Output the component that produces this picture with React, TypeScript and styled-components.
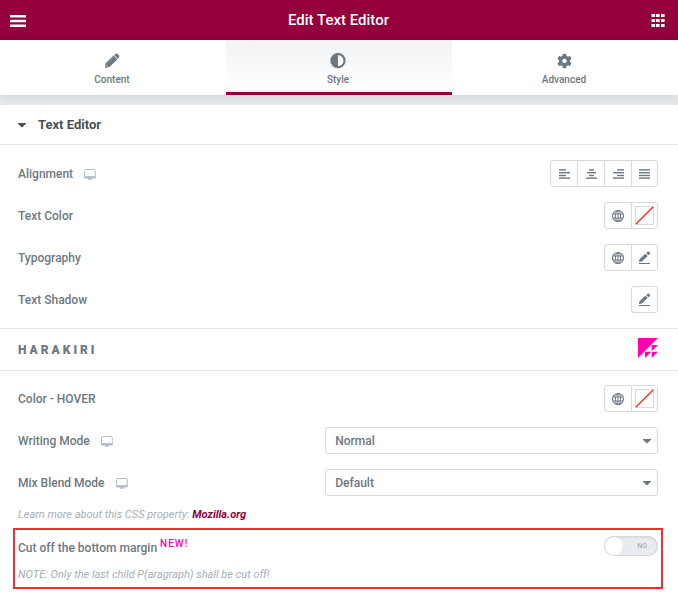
import React, { useState } from 'react';
import styled, { createGlobalStyle, css } from 'styled-components';

const BRAND = '#93003c';
const TEXT = '#6d7882';
const BORDER = '#d5dadf';
const RULE = '#e6e9ec';
const PINK = '#ff00b4';

const GlobalStyle = createGlobalStyle`
  *, *::before, *::after { box-sizing: border-box; }
  body {
    margin: 0;
    background: #fff;
    color: ${TEXT};
    font: 500 12px/15px Roboto, Arial, sans-serif;
  }
  button, select { font: inherit; color: inherit; }
  h1, h2, p { margin: 0; }
`;

const Header = styled.header`
  display: flex;
  align-items: center;
  justify-content: space-between;
  height: 40px;
  padding: 0 13px 0 10px;
  background: ${BRAND};
  color: #fff;
`;

const HeaderTitle = styled.h1`
  font-size: 15px;
  line-height: 20px;
  font-weight: 500;
`;

const HeaderButton = styled.button`
  display: flex;
  padding: 1px 0 0;
  border: 0;
  background: none;
`;

const Tabs = styled.nav`
  display: grid;
  grid-template-columns: repeat(3, 1fr);
  height: 55px;
  position: relative;
  box-shadow: 0 0 10px rgba(0, 0, 0, 0.12);
`;

const Tab = styled.button<{ $active?: boolean }>`
  display: flex;
  flex-direction: column;
  align-items: center;
  gap: 3px;
  padding: 13px 2px 0 0;
  border: 0;
  border-bottom: 3px solid transparent;
  background: #fff;
  font-size: 10px;
  line-height: 15px;
  ${(p) =>
    p.$active &&
    css`
      background: linear-gradient(#f1f3f5, #fff) padding-box;
      border-bottom-color: ${BRAND};
    `}
`;

const Content = styled.main`
  padding-top: 10px;
  background: #e6e9ec;
`;

const Panel = styled.section`
  background: #fff;
`;

const SectionToggle = styled.button`
  display: flex;
  align-items: center;
  gap: 11px;
  width: 100%;
  height: 40px;
  padding: 0 17px;
  border: 0;
  border-bottom: 1px solid ${RULE};
  background: #fff;
  color: #495157;
`;

const SectionTitle = styled.span`
  font-size: 13px;
  font-weight: 700;
`;

const Controls = styled.div`
  display: flex;
  flex-direction: column;
  gap: 15px;
  padding: 15px 20px 15px 18px;
`;

const Row = styled.div`
  display: flex;
  align-items: center;
  justify-content: space-between;
  min-height: 27px;
`;

const LabelGroup = styled.div`
  display: flex;
  align-items: center;
  gap: 10px;
  padding-top: 2px;
`;

const DeviceButton = styled.button`
  display: flex;
  padding: 0;
  border: 0;
  background: none;
`;

const ButtonGroup = styled.div`
  display: flex;
  border: 1px solid ${BORDER};
  border-radius: 3px;
`;

const IconButton = styled.button`
  display: flex;
  align-items: center;
  justify-content: center;
  width: 26px;
  height: 25px;
  padding: 0;
  border: 0;
  background: none;

  & + & {
    width: 27px;
    border-left: 1px solid ${BORDER};
  }
  & + &:last-child { width: 26px; }
  &:only-child { width: 25px; }
`;

const Brand = styled.div`
  display: flex;
  align-items: center;
  justify-content: space-between;
  height: 42px;
  padding: 0 20px 3px 18px;
  border-top: 1px solid ${RULE};
`;

const BrandControls = styled(Controls)`
  padding-top: 14px;
  border-top: 1px solid ${RULE};
`;

const BrandName = styled.h2`
  padding-top: 5px;
  font-size: 12px;
  line-height: 15px;
  font-weight: 900;
  letter-spacing: 3px;
`;

const SelectWrap = styled.div`
  display: grid;
  align-items: center;
  width: 52%;

  & > * { grid-area: 1 / 1; }
  & > svg { justify-self: end; margin-right: 6px; pointer-events: none; }
`;

const Select = styled.select`
  appearance: none;
  width: 100%;
  height: 27px;
  padding: 2px 9px 0;
  border: 1px solid ${BORDER};
  border-radius: 3px;
  background: #fff;
`;

const Note = styled.p`
  color: #a4afb7;
  font-size: 11px;
  line-height: 15px;
  font-weight: 400;
  font-style: italic;
`;

const NoteLink = styled.a`
  color: ${BRAND};
  font-weight: 700;
  text-decoration: none;
`;

const Learn = styled(Note)`
  margin-top: -4px;
`;

const Highlight = styled.div`
  display: flex;
  flex-direction: column;
  gap: 9px;
  margin: -9px -5px 0;
  padding: 4px 3px 5px;
  border: 2px solid #fb2a2e;
`;

const SwitchLine = styled.div`
  display: flex;
  align-items: center;
  justify-content: space-between;
  height: 24px;
`;

const SwitchLabel = styled.label`
  padding-top: 3px;
`;

const NewTag = styled.sup`
  margin-left: 3px;
  color: ${PINK};
  font-size: 10px;
  line-height: 9px;
  letter-spacing: 1px;
`;

const Switch = styled.input`
  appearance: none;
  display: flex;
  align-items: center;
  justify-content: space-between;
  width: 54px;
  height: 20px;
  margin: 0;
  padding-right: 11px;
  border-radius: 10px;
  background: #e9ebee;
  box-shadow: inset 0 0 0 1px ${BORDER}, inset 0 1px 3px rgba(0, 0, 0, 0.15);
  color: #a4afb7;
  font: 500 7px/10px Roboto, Arial, sans-serif;

  &::before {
    content: '';
    width: 18px;
    height: 18px;
    margin-left: 1px;
    border-radius: 50%;
    background: #fff;
  }
  &::after { content: 'NO'; }
  &:checked { flex-direction: row-reverse; padding: 0 1px 0 11px; background: #39b54a; color: #fff; }
  &:checked::after { content: 'YES'; }
`;

const MenuIcon = () => (
  <svg width="16" height="12" viewBox="0 0 16 12" fill="currentColor">
    <path d="M.5 0h15q.5 0 .5.5v1.400q0 .5-.5.5H.5q-.5 0-.5-.5V.5Q0 0 .5 0zM.5 4.800h15q.5 0 .5.500v1.400q0 .5-.5.5H.5q-.5 0-.5-.5V5.300q0-.5.5-.5zM.5 9.600h15q.5 0 .5.500v1.400q0 .5-.5.5H.5q-.5 0-.5-.5V10.100q0-.5.5-.5z" />
  </svg>
);

const AppsIcon = () => (
  <svg width="14" height="13" viewBox="0 0 14 13" fill="currentColor">
    {[0, 5, 10].map((y) =>
      [0.5, 5, 10].map((x) => <rect key={`${x}-${y}`} x={x} y={y} width="3.600" height="3" />)
    )}
  </svg>
);

const PencilIcon = () => (
  <svg width="16" height="16" viewBox="0 0 16 16" fill="currentColor">
    <path d="M1 14.300l.5-3.500q.1-.5.400-.8L9.600 2.600l3.700 3.800-7.500 7.400q-.4.400-.9.500l-3.200.5q-.8.100-.7-.5zM10.100 2.100L11.500.9q1.200-.9 2.300.1l1.100 1.200q.9 1.100 0 2.200L13.800 5.900z" />
    <path d="M3.600 10.300l5.600-5.500" stroke="#fff" strokeOpacity=".4" strokeWidth=".5" />
    <path d="M2.300 11.900l1.500 1.700" stroke="#fff" strokeOpacity=".7" strokeWidth="1" />
  </svg>
);

const ContrastIcon = () => (
  <svg width="16" height="16" viewBox="0 0 16 16">
    <circle cx="8" cy="7.600" r="6.600" fill="none" stroke="currentColor" strokeWidth="2.200" />
    <path d="M8 1v13.200A6.600 6.600 0 0 1 8 1z" fill="currentColor" />
  </svg>
);

const GearIcon = () => (
  <svg width="15" height="16" viewBox="0 0 512 512" fill="currentColor">
    <path d="M487.400 315.700l-42.600-24.600c4.300-23.200 4.300-47 0-70.200l42.600-24.600c4.900-2.800 7.100-8.600 5.500-14-11.100-35.600-30-67.800-54.700-94.600-3.800-4.100-10-5.100-14.800-2.300L380.800 110c-17.900-15.400-38.500-27.300-60.800-35.100V25.800c0-5.600-3.900-10.500-9.400-11.700-36.700-8.200-74.300-7.800-109.200 0-5.500 1.200-9.400 6.100-9.400 11.700V75c-22.200 7.900-42.800 19.800-60.800 35.100L88.700 85.500c-4.900-2.800-11-1.900-14.800 2.300-24.700 26.700-43.600 58.900-54.700 94.600-1.700 5.400.6 11.200 5.500 14L67.300 221c-4.300 23.200-4.300 47 0 70.200l-42.600 24.600c-4.900 2.800-7.100 8.600-5.500 14 11.100 35.600 30 67.800 54.700 94.600 3.800 4.100 10 5.100 14.800 2.300l42.600-24.600c17.900 15.400 38.500 27.300 60.800 35.100v49.200c0 5.600 3.900 10.500 9.400 11.700 36.700 8.200 74.300 7.800 109.200 0 5.500-1.200 9.400-6.100 9.400-11.700v-49.200c22.200-7.900 42.800-19.800 60.800-35.100l42.600 24.600c4.900 2.800 11 1.900 14.800-2.300 24.700-26.700 43.600-58.900 54.700-94.600 1.500-5.500-.7-11.300-5.600-14.100zM256 330c-41 0-74-33-74-74s33-74 74-74 74 33 74 74-33 74-74 74z" />
  </svg>
);

const Caret = () => (
  <svg width="10" height="6" viewBox="0 0 10 6" fill="currentColor">
    <path d="M1 1h8q.4.300 0 .8L5.600 5q-.6.500-1.200 0L1 1.800Q.6 1.300 1 1z" />
  </svg>
);

const DesktopIcon = () => (
  <svg width="14" height="12" viewBox="0 0 14 12">
    <path d="M2.500.500h8.800q1 0 1 1V8H1.500V1.500q0-1 1-1z" fill="#fff" stroke="#b3bec6" />
    <path d="M1 7.200h11.800v1.300q0 1-1 1H2q-1 0-1-1zM5.300 9.500h3.200l.4 1.200H4.900z" fill="#b0bcc5" />
  </svg>
);

type Align = 'left' | 'center' | 'right' | 'justify';

const AlignIcon = ({ align }: { align: Align }) => {
  const widths = align === 'justify' ? [11, 11, 11, 11] : align === 'center' ? [5, 9, 5, 11] : [7, 11, 7, 11];
  const starts = widths.map((w) => (align === 'right' ? 11 - w : align === 'center' ? (11 - w) / 2 : 0));
  return (
    <svg width="11" height="11" viewBox="0 0 11 11" fill="#6d7882">
      {widths.map((w, i) => (
        <rect key={i} x={starts[i]} y={[1.2, 4, 6.8, 9.4][i]} width={w} height="1.400" />
      ))}
    </svg>
  );
};

const GlobeIcon = () => (
  <svg width="12" height="13" viewBox="0 0 12 13" fill="none" stroke="currentColor">
    <circle cx="6" cy="7" r="5.500" strokeWidth="1.100" />
    <ellipse cx="6" cy="7" rx="2.600" ry="5.500" />
    <path d="M1 5h10M1 9h10M6 1.500v11" />
  </svg>
);

const EditIcon = () => (
  <svg width="12" height="13" viewBox="0 0 12 13" fill="currentColor">
    <path d="M0 11l.4-2.700L6.400 2.700l2.300 2.300-5.800 5.400zM7.200 2L8.600.7q.7-.6 1.400 0l.8.8q.6.700 0 1.400L9.400 4.200z" />
    <path d="M0 12h11v1H0z" />
  </svg>
);

const NoColorIcon = () => (
  <svg width="19" height="19" viewBox="0 0 19 19" fill="none">
    <rect x=".5" y=".5" width="18" height="18" stroke={BORDER} />
    <path d="M1 18L18 1" stroke="#ff1f1f" strokeWidth="1.200" />
  </svg>
);

const BrandMark = () => (
  <svg width="20" height="20" viewBox="0 0 20 20" fill={PINK}>
    <path d="M0 0h20L0 20zM13.700 7H20l-6.300 6.300zM7 13.700h6.300L7 20zM13.700 13.700H20L13.700 20z" />
  </svg>
);

const Label = ({ text, htmlFor, responsive }: { text: string; htmlFor?: string; responsive?: boolean }) => (
  <LabelGroup>
    {htmlFor ? <label htmlFor={htmlFor}>{text}</label> : <span>{text}</span>}
    {responsive && (
      <DeviceButton aria-label={`${text} device`}>
        <DesktopIcon />
      </DeviceButton>
    )}
  </LabelGroup>
);

const ColorRow = ({ text }: { text: string }) => (
  <Row>
    <Label text={text} />
    <ButtonGroup role="group" aria-label={text}>
      <IconButton aria-label="Global colors"><GlobeIcon /></IconButton>
      <IconButton aria-label="Pick color"><NoColorIcon /></IconButton>
    </ButtonGroup>
  </Row>
);

const SelectRow = ({ id, text, options }: { id: string; text: string; options: string[] }) => (
  <Row>
    <Label text={text} htmlFor={id} responsive />
    <SelectWrap>
      <Select id={id}>
        {options.map((o) => <option key={o}>{o}</option>)}
      </Select>
      <Caret />
    </SelectWrap>
  </Row>
);

const TABS = [
  { name: 'Content', Icon: PencilIcon },
  { name: 'Style', Icon: ContrastIcon },
  { name: 'Advanced', Icon: GearIcon },
];

const ALIGNMENTS: Align[] = ['left', 'center', 'right', 'justify'];

export default function App() {
  const [tab, setTab] = useState('Style');
  return (
    <>
      <GlobalStyle />
      <Header>
        <HeaderButton aria-label="Menu"><MenuIcon /></HeaderButton>
        <HeaderTitle>Edit Text Editor</HeaderTitle>
        <HeaderButton aria-label="Widgets"><AppsIcon /></HeaderButton>
      </Header>
      <Tabs>
        {TABS.map(({ name, Icon }) => (
          <Tab key={name} $active={tab === name} onClick={() => setTab(name)}>
            <Icon />
            {name}
          </Tab>
        ))}
      </Tabs>
      <Content>
        <Panel>
          <SectionToggle aria-expanded="true">
            <Caret />
            <SectionTitle>Text Editor</SectionTitle>
          </SectionToggle>
          <Controls>
            <Row>
              <Label text="Alignment" responsive />
              <ButtonGroup role="group" aria-label="Alignment">
                {ALIGNMENTS.map((a) => (
                  <IconButton key={a} aria-label={a}><AlignIcon align={a} /></IconButton>
                ))}
              </ButtonGroup>
            </Row>
            <ColorRow text="Text Color" />
            <Row>
              <Label text="Typography" />
              <ButtonGroup role="group" aria-label="Typography">
                <IconButton aria-label="Global fonts"><GlobeIcon /></IconButton>
                <IconButton aria-label="Edit typography"><EditIcon /></IconButton>
              </ButtonGroup>
            </Row>
            <Row>
              <Label text="Text Shadow" />
              <ButtonGroup>
                <IconButton aria-label="Edit text shadow"><EditIcon /></IconButton>
              </ButtonGroup>
            </Row>
          </Controls>
          <Brand>
            <BrandName>HARAKIRI</BrandName>
            <BrandMark />
          </Brand>
          <BrandControls>
            <ColorRow text="Color - HOVER" />
            <SelectRow id="writing-mode" text="Writing Mode" options={['Normal']} />
            <SelectRow id="blend-mode" text="Mix Blend Mode" options={['Default']} />
            <Learn>
              Learn more about this CSS property: <NoteLink href="#mozilla">Mozilla.org</NoteLink>
            </Learn>
            <Highlight>
              <SwitchLine>
                <SwitchLabel htmlFor="cut-margin">
                  Cut off the bottom margin<NewTag>NEW!</NewTag>
                </SwitchLabel>
                <Switch id="cut-margin" type="checkbox" role="switch" />
              </SwitchLine>
              <Note>NOTE: Only the last child P(aragraph) shall be cut off!</Note>
            </Highlight>
          </BrandControls>
        </Panel>
      </Content>
    </>
  );
}
